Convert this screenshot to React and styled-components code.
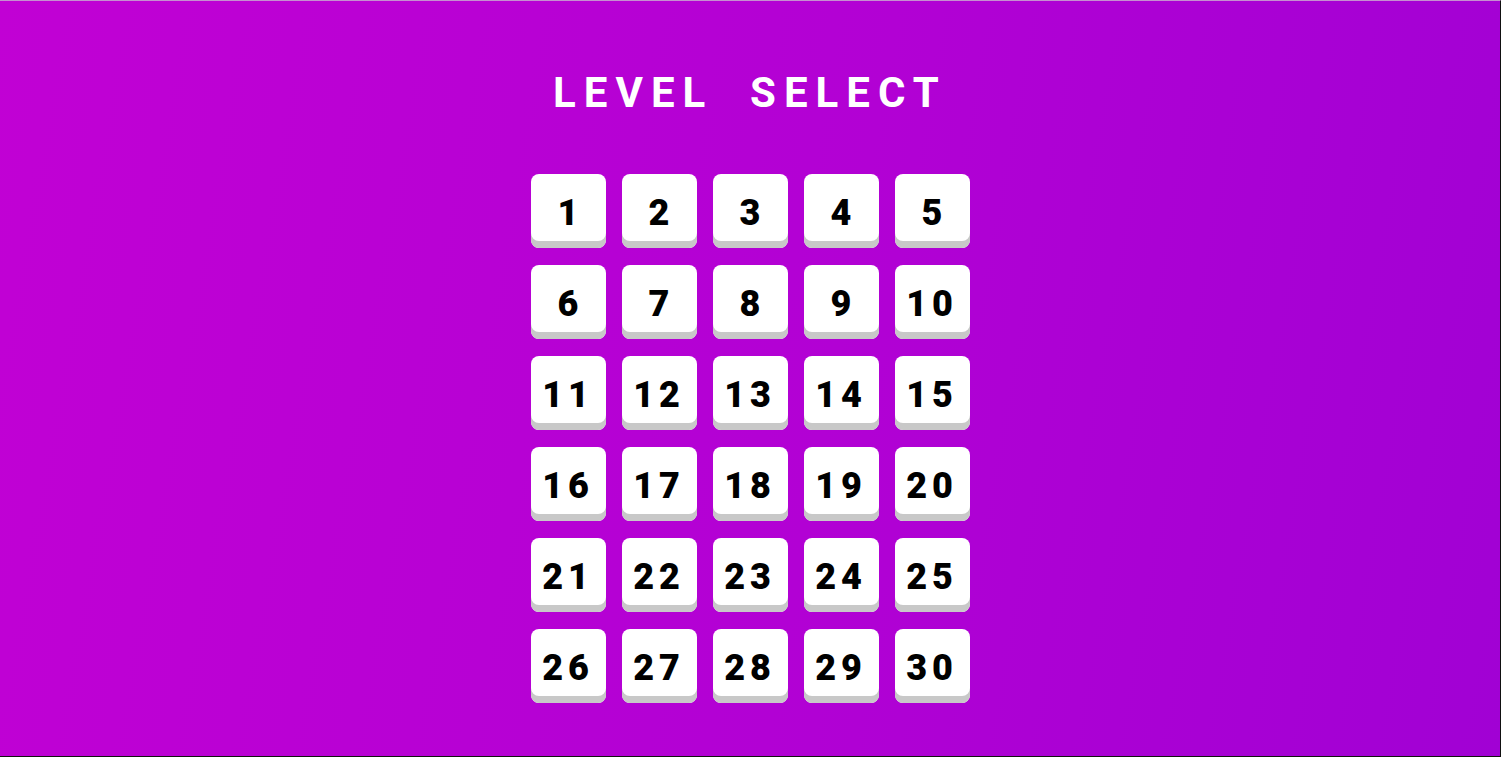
import React from 'react';
import styled, { createGlobalStyle } from 'styled-components';

const GlobalStyle = createGlobalStyle`
  html, body {
    margin: 0;
    padding: 0;
  }
  body {
    font-family: Roboto, "Liberation Sans", sans-serif;
  }
`;

const Screen = styled.div`
  box-sizing: border-box;
  width: 100%;
  height: 757px;
  background: linear-gradient(100deg, #c101d4 0%, #b201d4 55%, #a101d4 100%);
  border-top: 1px solid #c68fd0;
  border-right: 1px solid #111;
  border-bottom: 1px solid #111;
  display: flex;
  flex-direction: column;
  align-items: center;
`;

const Heading = styled.h1`
  margin: 70px 0 0 0;
  color: #fff;
  font-family: Roboto, "Liberation Sans", sans-serif;
  font-weight: 700;
  font-size: 42px;
  line-height: 44px;
  letter-spacing: 8px;
  white-space: pre;
`;

const Grid = styled.div`
  margin-top: 59px;
  display: grid;
  grid-template-columns: repeat(5, 75px);
  column-gap: 16px;
  row-gap: 17px;
`;

const LevelButton = styled.button`
  box-sizing: border-box;
  width: 75px;
  height: 74px;
  padding: 4px 0 0 0;
  border: none;
  border-radius: 8px;
  background: #fff;
  box-shadow: inset 0 -7px 0 #c8c8c8;
  color: #000;
  font-family: Roboto, "Liberation Sans", sans-serif;
  font-weight: 900;
  font-size: 36px;
  letter-spacing: ${({ $wide }) => ($wide ? '5px' : '0')};
  cursor: pointer;
  display: flex;
  align-items: center;
  justify-content: center;
`;

const levels = Array.from({ length: 30 }, (_, i) => i + 1);

export default function App() {
  return (
    <>
      <GlobalStyle />
      <Screen>
        <Heading>{'LEVEL  SELECT'}</Heading>
        <Grid>
          {levels.map((n) => (
            <LevelButton key={n} $wide={n > 9}>
              {n}
            </LevelButton>
          ))}
        </Grid>
      </Screen>
    </>
  );
}
